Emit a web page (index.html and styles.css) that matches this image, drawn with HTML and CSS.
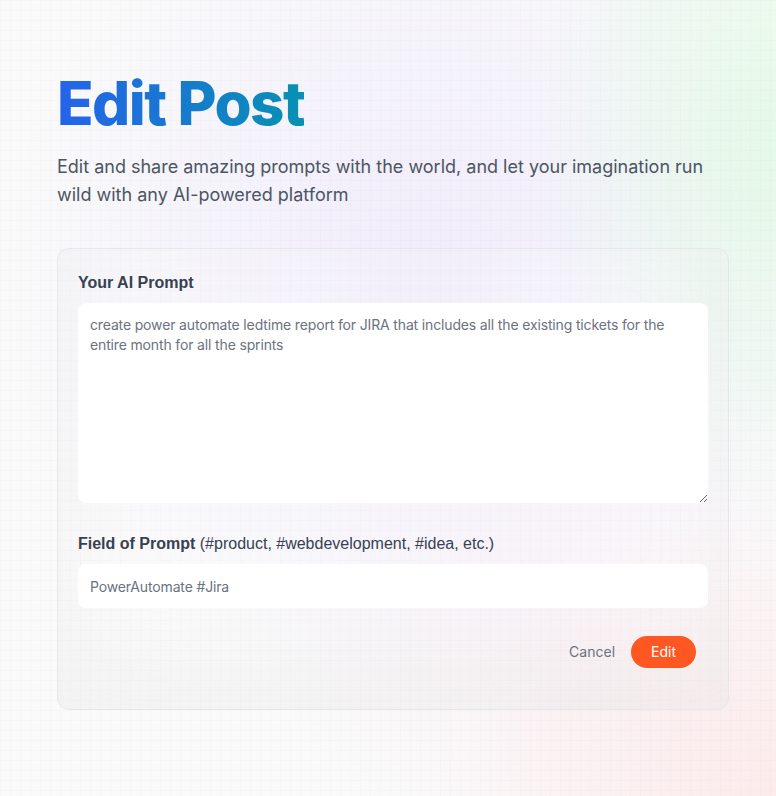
FILE: index.html
```html
<!DOCTYPE html>
<html lang="en">
<head>
<meta charset="utf-8">
<title>Edit Post</title>
<link rel="stylesheet" href="styles.css">
</head>
<body>
<div class="bg"></div>
<main class="app">
  <section class="section">
    <h1 class="head-text"><span class="blue-gradient">Edit Post</span></h1>
    <p class="desc">Edit and share amazing prompts with the world, and let your imagination run wild with any AI-powered platform</p>
    <form class="form glass">
      <label class="field">
        <span class="label">Your AI Prompt</span>
        <textarea class="textarea">create power automate ledtime report for JIRA that includes all the existing tickets for the entire month for all the sprints</textarea>
      </label>
      <label class="field">
        <span class="label">Field of Prompt <span class="normal">(#product, #webdevelopment, #idea, etc.)</span></span>
        <input class="input" type="text" value="PowerAutomate #Jira">
      </label>
      <div class="actions">
        <a class="cancel" href="#">Cancel</a>
        <button class="btn" type="button">Edit</button>
      </div>
    </form>
  </section>
</main>
</body>
</html>
```

FILE: styles.css
```css
* { box-sizing: border-box; }
html, body { margin: 0; padding: 0; }
body {
  width: 776px;
  height: 796px;
  overflow: hidden;
  font-family: Inter, "Noto Sans", sans-serif;
  background: #fafafa;
  position: relative;
}
.bg {
  position: absolute;
  inset: 0;
  z-index: 0;
  background-image:
    linear-gradient(to right, rgba(120,120,150,0.028) 1px, transparent 1px),
    linear-gradient(to bottom, rgba(120,120,150,0.028) 1px, transparent 1px),
    radial-gradient(ellipse 240px 380px at 100% 18%, rgba(215,250,220,0.6), rgba(215,250,220,0) 100%),
    radial-gradient(ellipse 340px 280px at 100% 100%, rgba(255,222,222,0.55), rgba(255,222,222,0) 100%),
    radial-gradient(ellipse 440px 420px at 55% 35%, rgba(236,230,252,0.7), rgba(236,230,252,0) 100%),
    radial-gradient(ellipse 300px 260px at 72% 78%, rgba(250,234,242,0.45), rgba(250,234,242,0) 100%);
  background-size: 10px 10px, 10px 10px, auto, auto, auto, auto;
}
.app {
  position: relative;
  z-index: 1;
  padding: 0 47px 0 57px;
}
.section {
  display: flex;
  flex-direction: column;
  align-items: flex-start;
}
.head-text {
  margin: 69px 0 0;
  font-size: 60px;
  font-weight: 800;
  line-height: 1.15;
  letter-spacing: -1.5px;
}
.blue-gradient {
  background: linear-gradient(to right, #2563eb, #0891b2);
  -webkit-background-clip: text;
  background-clip: text;
  color: transparent;
}
.desc {
  margin: 15px 0 0;
  max-width: 672px;
  font-size: 18px;
  line-height: 28px;
  color: #4b5563;
}
.form {
  margin-top: 39px;
  width: 100%;
  max-width: 672px;
  display: flex;
  flex-direction: column;
  gap: 28px;
  padding: 21px 20px 21px;
}
.glass {
  border: 1px solid #e5e7eb;
  border-radius: 12px;
  background: rgba(255,255,255,0.2);
  box-shadow: inset 10px -50px 94px 0 rgba(199,199,199,0.17);
}
.field { display: block; }
.label {
  display: block;
  font-family: "Liberation Sans", Arial, sans-serif;
  font-weight: 700;
  font-size: 16px;
  line-height: 25px;
  color: #374151;
}
.normal { font-weight: 400; }
.textarea, .input {
  display: flex;
  width: 100%;
  margin-top: 8px;
  padding: 12px;
  border: none;
  border-radius: 8px;
  background: #fff;
  font-family: Inter, "Noto Sans", sans-serif;
  font-size: 14px;
  line-height: 20px;
  letter-spacing: -0.15px;
  color: #6b7280;
  outline: 0;
}
.textarea { height: 200px; resize: vertical; }
.input { height: 44px; }
.actions {
  display: flex;
  justify-content: flex-end;
  align-items: center;
  gap: 16px;
  margin: 0 12px 20px;
}
.cancel {
  font-size: 14px;
  line-height: 20px;
  color: #6b7280;
  text-decoration: none;
}
.btn {
  padding: 6px 20px;
  font-family: Inter, "Noto Sans", sans-serif;
  font-size: 14px;
  line-height: 20px;
  border: none;
  border-radius: 9999px;
  background: #ff5722;
  color: #fff;
}
```
